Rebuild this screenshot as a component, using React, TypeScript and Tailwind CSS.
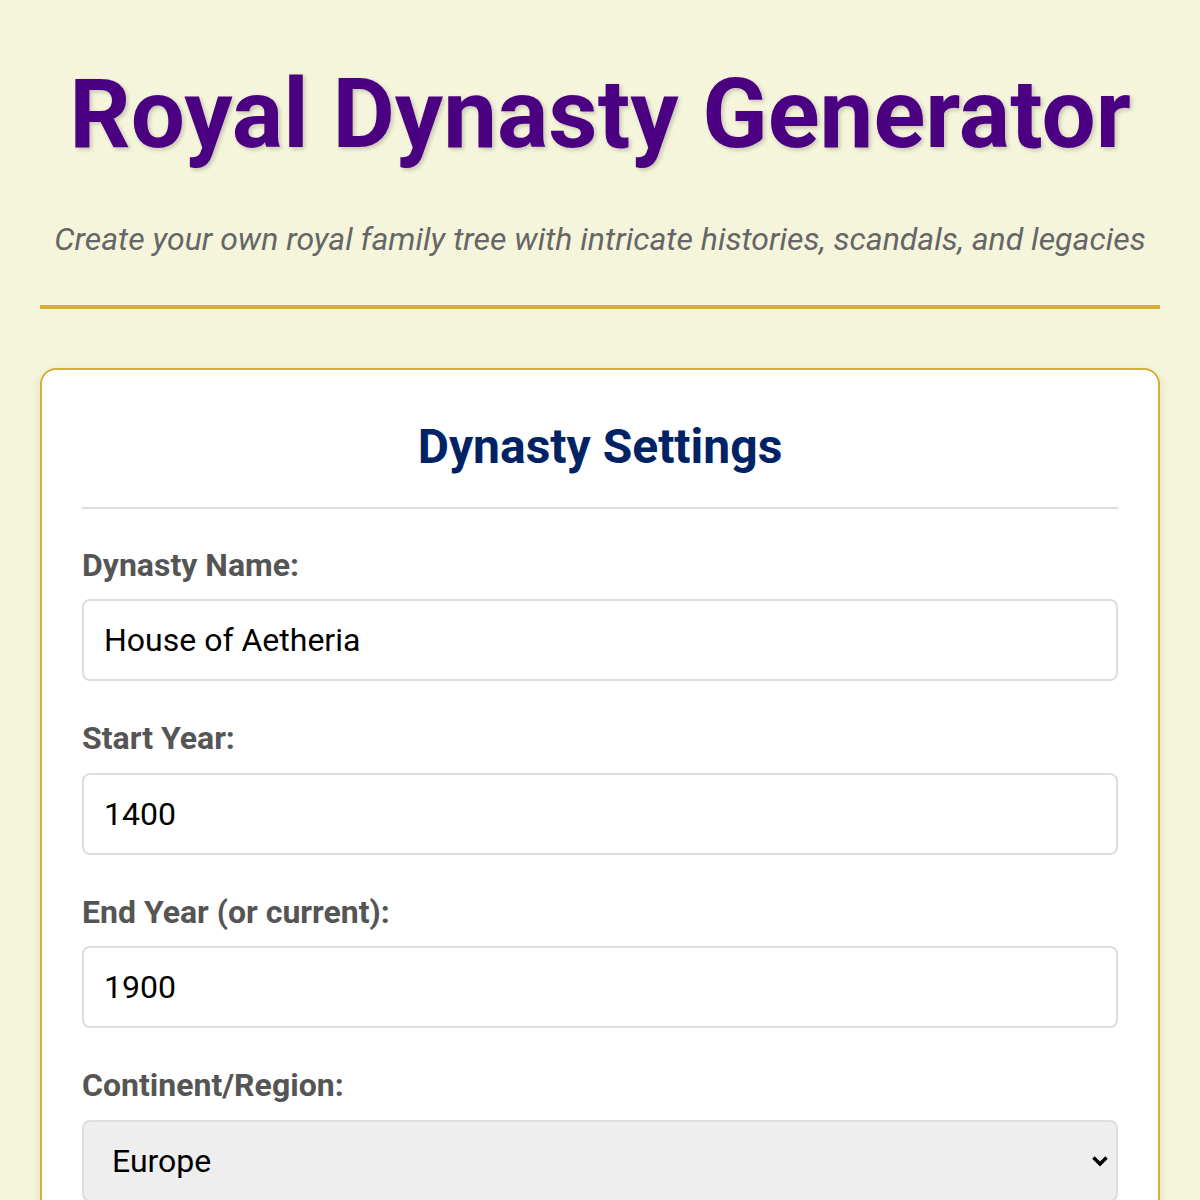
import React from "react";

export default function App() {
  const font = { fontFamily: "Roboto, 'Noto Sans', sans-serif" };
  return (
    <div className="min-h-[1200px] bg-[#f5f5dc] px-[40px]" style={font}>
      <header className="pt-[58px] text-center">
        <h1 className="m-0 text-[96px] leading-[112px] font-bold text-[#4b0082] [text-shadow:2px_2px_4px_rgba(0,0,0,0.2)]">
          Royal Dynasty Generator
        </h1>
        <p className="mt-[51px] text-[32px] leading-[37.5px] italic text-[#666]">
          Create your own royal family tree with intricate histories, scandals, and legacies
        </p>
        <div className="mt-[46px] h-[4px] bg-[#d4af37]" />
      </header>
      <main className="mt-[59px] rounded-[16px] border-2 border-[#d4af37] bg-white px-[40px] pt-[49px] pb-[40px] shadow-[0_4px_12px_rgba(0,0,0,0.1)]">
        <h2 className="border-b-2 border-[#ddd] pb-[32px] text-center text-[48px] leading-[56px] font-bold text-[#002366]">
          Dynasty Settings
        </h2>
        <div className="mt-[38px] flex flex-col">
          {[
            ["Dynasty Name:", "House of Aetheria"],
            ["Start Year:", "1400"],
            ["End Year (or current):", "1900"],
          ].map(([l, v]) => (
            <div key={l} className="mb-[39px] flex flex-col">
              <label className="mb-[15px] text-[32px] leading-[37.5px] font-bold text-[#555]">{l}</label>
              <input
                readOnly
                value={v}
                className="h-[82px] rounded-[8px] border-2 border-[#ddd] px-[20px] text-[32px] text-black outline-none"
                style={font}
              />
            </div>
          ))}
          <div className="flex flex-col">
            <label className="mb-[15px] text-[32px] leading-[37.5px] font-bold text-[#555]">Continent/Region:</label>
            <div className="relative">
              <select
                defaultValue="Europe"
                className="h-[82px] w-full appearance-none rounded-[8px] border-2 border-[#ddd] bg-[#eee] pl-[28px] pr-[40px] text-[32px] text-black outline-none"
                style={font}
              >
                <option>Europe</option>
                <option>Asia</option>
                <option>Africa</option>
              </select>
              <svg
                className="pointer-events-none absolute right-[9px] top-1/2 -translate-y-1/2"
                width="18"
                height="18"
                viewBox="0 0 18 18"
              >
                <path d="M2.5 5.5 L9 12 L15.5 5.5" fill="none" stroke="#000" strokeWidth="3.5" />
              </svg>
            </div>
          </div>
        </div>
      </main>
    </div>
  );
}
